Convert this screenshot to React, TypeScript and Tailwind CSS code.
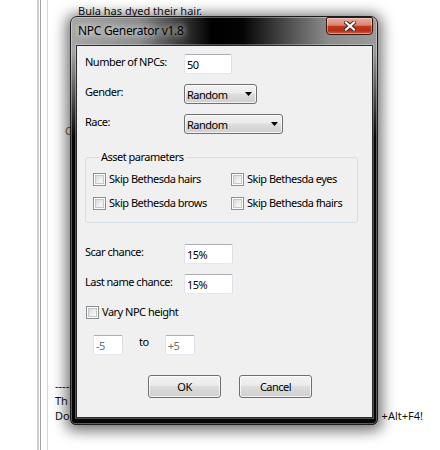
import type { ReactNode } from 'react';

const font = "font-['Segoe_UI','Noto_Sans',sans-serif]";
const buttonFace =
  'border border-[#707070] rounded-[3px] bg-[linear-gradient(180deg,#f2f2f2_0%,#ebebeb_45%,#dddddd_50%,#cfcfcf_100%)] shadow-[inset_0_0_0_1px_rgba(255,255,255,0.75)]';
const textBox =
  'flex h-[20px] items-center rounded-[2px] border border-[#abadb3] border-b-[#e3e9ef] border-l-[#e2e3ea] border-r-[#dbdfe6] bg-white px-[2px] leading-none';

function Combo({ value, className }: { value: string; className: string }) {
  return (
    <div className={`flex h-[20px] items-center justify-between pl-[2px] pr-[4px] ${buttonFace} ${className}`}>
      <span className="leading-none">{value}</span>
      <svg width="7" height="4" viewBox="0 0 7 4">
        <path d="M0 0h7L3.5 4z" fill="#000" />
      </svg>
    </div>
  );
}

function Check({ children }: { children: ReactNode }) {
  return (
    <label className="flex h-[16px] items-center gap-[3px] leading-[16px]">
      <span className="flex h-[13px] w-[13px] shrink-0 border border-[#8e8f8f] bg-white p-[1px]">
        <span className="h-full w-full border border-[#c4c7cc] bg-[linear-gradient(135deg,#d6d8db_0%,#f0f0f0_60%,#fcfcfc_100%)]" />
      </span>
      <span>{children}</span>
    </label>
  );
}

function Row({ label, children, className = '' }: { label: string; children: ReactNode; className?: string }) {
  return (
    <div className={`flex items-start ${className}`}>
      <span className="w-[99px] shrink-0 leading-[16px]">{label}</span>
      {children}
    </div>
  );
}

function Dialog() {
  return (
    <div className="absolute left-[70px] top-[16px] flex h-[409px] w-[308px] flex-col rounded-t-[7px] rounded-b-[5px] border border-[#1c1c1c] bg-[linear-gradient(180deg,rgba(0,0,0,0)_0px,rgba(0,0,0,0)_34px,#060606_120px),linear-gradient(90deg,#a6a6a6_0%,#8e8e8e_22%,#3a3a3a_36%,#000_46%,#040404_56%,#4a4a4a_70%,#8c8c8c_84%,#9a9a9a_100%)] px-[4px] pb-[6px] text-[11px] tracking-[-0.5px] shadow-[0_2px_14px_4px_rgba(0,0,0,0.55),inset_0_0_0_1px_rgba(255,255,255,0.35)]">
      <div className="relative flex h-[28px] shrink-0 items-center pl-[3px]">
        <span className="text-[12px] tracking-[-0.3px] text-black [text-shadow:0_0_6px_rgba(255,255,255,0.9),0_0_10px_rgba(255,255,255,0.6)]">
          NPC Generator v1.8
        </span>
        <button
          type="button"
          className="absolute right-[0px] top-[0px] flex h-[18px] w-[47px] items-center justify-center rounded-b-[4px] rounded-t-[2px] border border-[#3a150d] bg-[linear-gradient(180deg,#eab0a2_0%,#d98571_45%,#c3391d_52%,#b42f17_78%,#d4603f_100%)] shadow-[inset_0_0_0_1px_rgba(255,220,210,0.45)]"
        >
          <svg width="12" height="10" viewBox="0 0 12 10">
            <path d="M2 1.5l8 7M10 1.5l-8 7" stroke="#3b2420" strokeWidth="4" strokeLinecap="square" />
            <path d="M2 1.5l8 7M10 1.5l-8 7" stroke="#fff" strokeWidth="2.2" strokeLinecap="square" />
          </svg>
        </button>
      </div>

      <div className="ml-[1px] flex flex-1 flex-col border border-[#2a2a2a] bg-[#f0f0f0] pl-[8px] pt-[8px] text-black shadow-[0_0_0_1px_rgba(255,255,255,0.3)]">
        <Row label="Number of NPCs:">
          <div className={`w-[48px] ${textBox}`}>50</div>
        </Row>
        <Row label="Gender:" className="mt-[10px]">
          <Combo value="Random" className="w-[73px]" />
        </Row>
        <Row label="Race:" className="mt-[10px]">
          <Combo value="Random" className="w-[99px]" />
        </Row>

        <fieldset className="mt-[15px] w-[273px] rounded-[3px] border border-[#d5dfe5] px-[7px] pb-[11px] pt-0">
          <legend className="ml-[6px] px-[2px] leading-[16px]">Asset parameters</legend>
          <div className="mt-[6px] grid grid-cols-[138px_1fr] gap-y-[8px]">
            <Check>Skip Bethesda hairs</Check>
            <Check>Skip Bethesda eyes</Check>
            <Check>Skip Bethesda brows</Check>
            <Check>Skip Bethesda fhairs</Check>
          </div>
        </fieldset>

        <Row label="Scar chance:" className="mt-[21px]">
          <div className={`w-[49px] ${textBox}`}>15%</div>
        </Row>
        <Row label="Last name chance:" className="mt-[10px]">
          <div className={`w-[49px] ${textBox}`}>15%</div>
        </Row>

        <div className="ml-[1px] mt-[10px]">
          <Check>Vary NPC height</Check>
        </div>

        <div className="ml-[8px] mt-[15px] flex items-start">
          <div className={`w-[30px] text-[#6d6d6d] ${textBox}`}>-5</div>
          <span className="ml-[16px] leading-[14px]">to</span>
          <div className={`ml-[16px] w-[30px] text-[#6d6d6d] ${textBox}`}>+5</div>
        </div>

        <div className="ml-[63px] mt-[20px] flex gap-[18px]">
          <button type="button" className={`h-[23px] w-[73px] leading-none ${buttonFace}`}>
            OK
          </button>
          <button type="button" className={`h-[23px] w-[73px] leading-none ${buttonFace}`}>
            Cancel
          </button>
        </div>
      </div>
    </div>
  );
}

const blank = '\u00a0';

export default function App() {
  const lines: { text: string; pad: string; color?: string; tail?: string }[] = [
    { text: 'Bula has dyed their hair.', pad: 'pl-[30px]' },
    ...Array.from({ length: 7 }, () => ({ text: blank, pad: '' })),
    { text: 'C', pad: 'pl-[17px]', color: 'text-[#9a5a12]' },
    ...Array.from({ length: 16 }, () => ({ text: blank, pad: '' })),
    { text: '---------------------', pad: 'pl-[7px]' },
    { text: 'Th', pad: 'pl-[7px]' },
    { text: 'Do', pad: 'pl-[7px]', tail: '+Alt+F4!' },
  ];

  return (
    <div className={`relative h-[450px] w-[440px] overflow-hidden bg-white ${font}`}>
      <div className="flex h-full">
        <div className="w-[37px] shrink-0" />
        <div className="w-[2px] shrink-0 bg-[#cdcdcd]" />
        <div className="w-[1px] shrink-0" />
        <div className="w-[1px] shrink-0 bg-[#a3a3a3]" />
        <div className="w-[6px] shrink-0" />
        <div className="w-[1px] shrink-0 bg-[#dadada]" />
        <div className="flex-1 pt-[3px] text-[11px] text-[#111]">
          {lines.map((line, i) => (
            <div key={i} className={`flex h-[15px] items-center whitespace-nowrap leading-[15px] ${line.pad} ${line.color ?? ''}`}>
              <span>{line.text}</span>
              {line.tail && <span className="ml-auto pr-[17px]">{line.tail}</span>}
            </div>
          ))}
        </div>
      </div>
      <Dialog />
    </div>
  );
}
